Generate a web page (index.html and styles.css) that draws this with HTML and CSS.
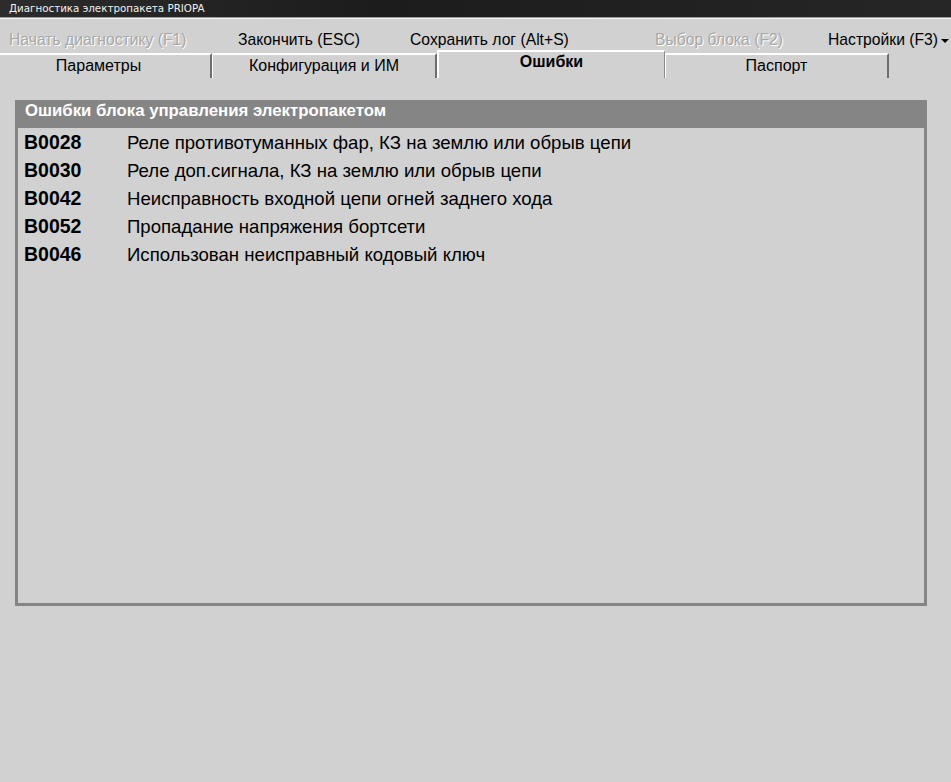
FILE: index.html
```html
<!doctype html>
<html lang="ru">
<head>
  <meta charset="UTF-8">
  <title>Диагностика электропакета PRIOPA</title>
  <link rel="stylesheet" href="styles.css">
</head>
<body>
<div class="titlebar">Диагностика электропакета PRIOPA</div>

<div class="menu">
  <span class="menu-item disabled">Начать диагностику (F1)</span>
  <span class="menu-item">Закончить (ESC)</span>
  <span class="menu-item">Сохранить лог (Alt+S)</span>
  <span class="menu-item disabled">Выбор блока (F2)</span>
  <span class="menu-item">Настройки (F3)<span class="arrow"></span></span>
</div>

<div class="tabs">
  <div class="tab">Параметры</div>
  <div class="tab">Конфигурация и ИМ</div>
  <div class="tab active">Ошибки</div>
  <div class="tab">Паспорт</div>
</div>

<div class="page">
  <div class="panel">
    <div class="panel-head">Ошибки блока управления электропакетом</div>
    <ul class="errors">
      <li><span class="code">B0028</span>Реле противотуманных фар, КЗ на землю или обрыв цепи</li>
      <li><span class="code">B0030</span>Реле доп.сигнала, КЗ на землю или обрыв цепи</li>
      <li><span class="code">B0042</span>Неисправность входной цепи огней заднего хода</li>
      <li><span class="code">B0052</span>Пропадание напряжения бортсети</li>
      <li><span class="code">B0046</span>Использован неисправный кодовый ключ</li>
    </ul>
  </div>
</div>
</body>
</html>
```

FILE: styles.css
```css
body {
  margin: 0;
  background: #d1d1d1;
  font-family: "Liberation Sans", Arial, sans-serif;
  color: #000;
  height: 782px;
  overflow: hidden;
}

.titlebar {
  height: 17px;
  line-height: 16px;
  padding-left: 9px;
  font-family: "DejaVu Sans", sans-serif;
  font-size: 10.3px;
  color: #f0f0f0;
  background: linear-gradient(to right, #2c2c2c 0%, #1c1c1c 40%, #262626 100%);
  border-bottom: 1px solid #9a9a9a;
}

.menu {
  display: grid;
  grid-template-columns: 229px 172px 245px 173px auto;
  padding-left: 9px;
  height: 34px;
  border-top: 1px solid #f4f4f4;
  align-items: center;
  font-size: 15.7px;
}

.menu-item {
  white-space: nowrap;
  padding-top: 8px;
}

.menu-item.disabled {
  color: #a8a8a8;
  text-shadow: 1px 1px 0 #fff;
}

.arrow {
  display: inline-block;
  margin-left: 3px;
  vertical-align: middle;
  border-left: 4px solid transparent;
  border-right: 4px solid transparent;
  border-top: 4px solid #000;
}

.tabs {
  display: grid;
  grid-template-columns: 226px 225px 228px 224px;
  margin-left: -14px;
  height: 25px;
  align-items: end;
}

.tab {
  box-sizing: border-box;
  height: 25px;
  line-height: 21px;
  text-align: center;
  font-size: 16px;
  border-top: 2px solid #fff;
  border-left: 1px solid #fff;
  border-right: 2px solid #6e6e6e;
}

.tab.active {
  font-weight: bold;
  height: 28px;
  margin-top: -3px;
  line-height: 20px;
  border-left: 2px solid #fff;
  border-right: 1px solid #8a8a8a;
  position: relative;
  z-index: 1;
}

.page {
  padding: 22px 24px 0 15px;
}

.panel {
  height: 503px;
  border: 3px solid #858585;
  border-top: none;
}

.panel-head {
  background: #858585;
  color: #fff;
  font-weight: bold;
  font-size: 16.8px;
  height: 28px;
  line-height: 21px;
  margin: 0 -3px;
  padding-left: 10px;
}

.errors {
  list-style: none;
  margin: 0;
  padding: 0 0 0 6px;
}

.errors li {
  height: 28px;
  line-height: 28px;
  font-size: 18.6px;
  white-space: nowrap;
}

.code {
  display: inline-block;
  width: 103px;
  font-size: 19.5px;
  font-weight: bold;
}
```
